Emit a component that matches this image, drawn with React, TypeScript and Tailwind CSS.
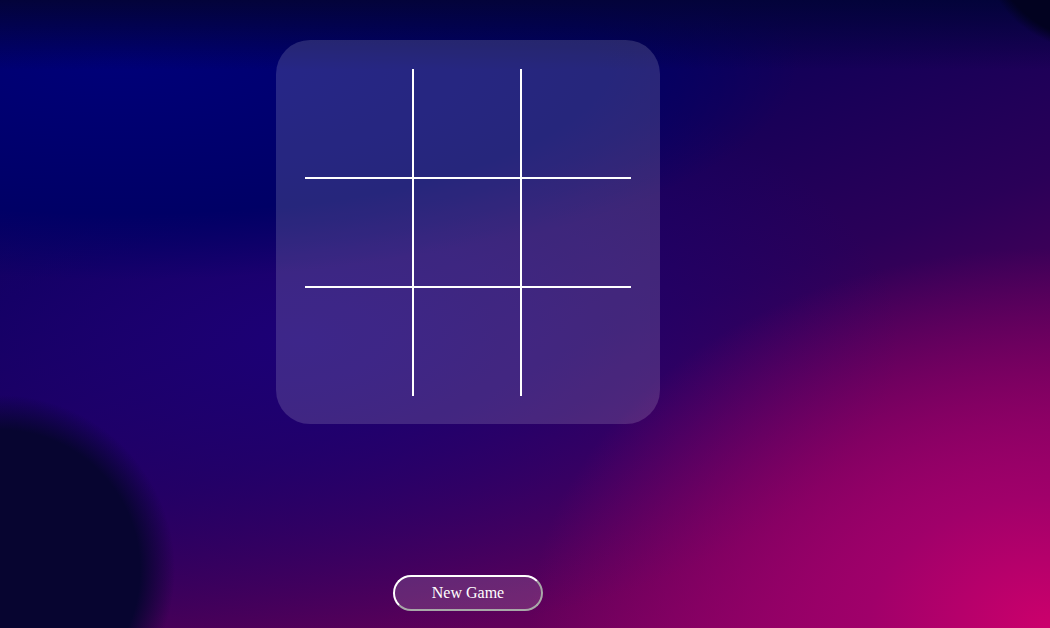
const cells = Array.from({ length: 9 }, (_, i) => i);

function cellBorder(i: number) {
  const row = Math.floor(i / 3);
  const col = i % 3;
  return [
    col === 1 ? "border-x-2 border-white" : "",
    row === 1 ? "border-y-2 border-white" : "",
  ].join(" ");
}

export default function App() {
  return (
    <div className="h-[628px] w-full overflow-hidden bg-[radial-gradient(circle_at_0px_570px,#070530_0,#070530_140px,transparent_175px),radial-gradient(circle_at_1090px_-60px,#020220_0,#020220_98px,transparent_110px),linear-gradient(180deg,#03033a_0,transparent_70px),radial-gradient(ellipse_520px_380px_at_100%_100%,#cc006c_0%,#a0006a_35%,transparent_100%),radial-gradient(ellipse_680px_220px_at_120px_60px,#000078_0%,#000066_70%,transparent_100%),radial-gradient(ellipse_600px_300px_at_300px_340px,#1c0076_0%,transparent_100%),linear-gradient(160deg,#04044e_0%,#0e0058_30%,#2a0058_55%,#560058_75%,#8a0062_100%)] font-['Liberation_Serif',serif]">
      <div className="ml-[276px] flex w-[384px] flex-col items-center pt-[40px]">
        <div className="h-[384px] w-[384px] rounded-[34px] bg-white/15 pl-[29px] pt-[29px]">
          <div className="grid h-[327px] w-[326px] grid-cols-[107px_110px_109px] grid-rows-[108px_111px_108px]">
            {cells.map((i) => (
              <div key={i} className={cellBorder(i)} />
            ))}
          </div>
        </div>
        <button className="mt-[151px] h-[36px] w-[150px] rounded-full border-2 border-t-white border-l-white border-r-[#a8a8a8] border-b-[#a8a8a8] bg-white/15 text-base text-white">
          New Game
        </button>
      </div>
    </div>
  );
}
